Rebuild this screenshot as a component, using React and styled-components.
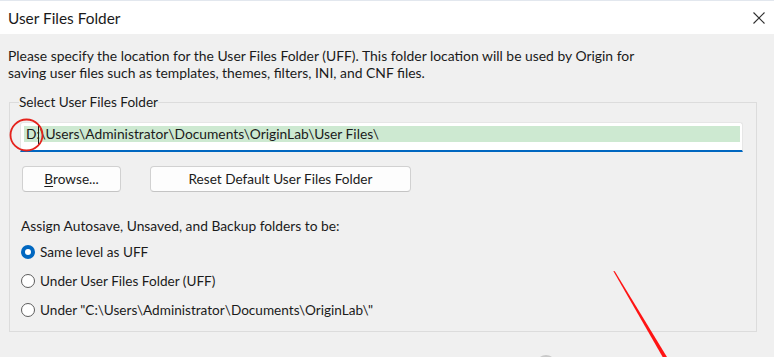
import React from "react";
import styled, { createGlobalStyle } from "styled-components";

const GlobalStyle = createGlobalStyle`
  html, body { margin: 0; padding: 0; background: #f0f0f0; }
  body { font-family: Lato, "Noto Sans", sans-serif; color: #1b1b1b; }
  * { box-sizing: border-box; }
`;

const Dialog = styled.div`
  position: relative;
  width: 774px;
  height: 357px;
  overflow: hidden;
  background: #f0f0f0;
`;

const TitleBar = styled.div`
  height: 34px;
  background: #ffffff;
  border-top: 1px solid #e2e7ee;
  display: flex;
  align-items: center;
  justify-content: space-between;
  padding: 0 9px 0 8px;
`;

const Title = styled.div`
  font-size: 15.4px;
  color: #1a1a1a;
`;

const CloseButton = styled.div`
  width: 12px;
  height: 14px;
  display: flex;
  align-items: center;
  justify-content: center;
`;

const Body = styled.div`
  padding: 13px 17px 0 8px;
`;

const Description = styled.p`
  margin: 0;
  font-size: 13.9px;
  line-height: 17px;
  white-space: nowrap;
`;

const GroupBox = styled.fieldset`
  margin: 13px 0 0 1px;
  padding: 0 13px 7px 10px;
  border: 1px solid #dcdcdc;
  min-width: 0;
`;

const Legend = styled.legend`
  padding: 0;
  margin-left: -1px;
  font-size: 13.6px;
  line-height: 17px;
`;

const PathField = styled.div`
  margin-top: 11px;
  height: 30px;
  background: #ffffff;
  border: 1px solid #e6e6e6;
  border-bottom: 2px solid #0067c0;
  border-radius: 3px 3px 0 0;
  padding: 3px 2px 0 3px;
`;

const Selection = styled.div`
  height: 16px;
  background: #cde9d1;
  font-size: 13.8px;
  line-height: 16px;
  padding-left: 2px;
  white-space: nowrap;
  display: flex;
  align-items: center;
`;

const Caret = styled.span`
  display: inline-block;
  width: 1.5px;
  height: 19px;
  margin: 0 0 0 -2px;
  background: #202020;
`;

const ButtonRow = styled.div`
  display: flex;
  gap: 29px;
  margin: 14px 0 0 2px;
`;

const Button = styled.div`
  width: ${(p) => p.$w}px;
  height: 26px;
  background: #fdfdfd;
  border: 1px solid #d1d1d1;
  border-bottom-color: #c4c4c4;
  border-radius: 4px;
  font-size: 13.6px;
  display: flex;
  align-items: center;
  justify-content: center;
`;

const Key = styled.span`
  text-decoration: underline;
  text-underline-offset: 2px;
`;

const SectionLabel = styled.div`
  margin: 25px 0 0 1px;
  font-size: 13.8px;
  line-height: 17px;
`;

const RadioList = styled.div`
  margin: 3px 0 0 1px;
  display: flex;
  flex-direction: column;
`;

const RadioRow = styled.div`
  height: 29px;
  display: flex;
  align-items: center;
  gap: 5px;
  font-size: 13.6px;
`;

const RadioDot = styled.span`
  width: 14px;
  height: 14px;
  border-radius: 50%;
  flex: none;
  background: ${(p) => (p.$checked ? "#0067c0" : "#ffffff")};
  border: ${(p) => (p.$checked ? "none" : "1px solid #5d5d5d")};
  display: flex;
  align-items: center;
  justify-content: center;
  &::after {
    content: "";
    display: ${(p) => (p.$checked ? "block" : "none")};
    width: 6px;
    height: 6px;
    border-radius: 50%;
    background: #ffffff;
  }
`;

const Annotations = styled.svg`
  position: absolute;
  left: 0;
  top: 0;
  pointer-events: none;
`;

const options = [
  { label: "Same level as UFF", checked: true },
  { label: "Under User Files Folder (UFF)", checked: false },
  { label: 'Under "C:\\Users\\Administrator\\Documents\\OriginLab\\"', checked: false },
];

export default function App() {
  return (
    <>
      <GlobalStyle />
      <Dialog>
        <TitleBar>
          <Title>User Files Folder</Title>
          <CloseButton>
            <svg width="12" height="12" viewBox="0 0 12 12">
              <path d="M0.5 0.5 L11.5 11.5 M11.5 0.5 L0.5 11.5" stroke="#303030" strokeWidth="1.1" fill="none" />
            </svg>
          </CloseButton>
        </TitleBar>
        <Body>
          <Description>
            Please specify the location for the User Files Folder (UFF). This folder location will be used by Origin for
            <br />
            saving user files such as templates, themes, filters, INI, and CNF files.
          </Description>
          <GroupBox>
            <Legend>Select User Files Folder</Legend>
            <PathField>
              <Selection>
                D:<Caret />
                {"\\Users\\Administrator\\Documents\\OriginLab\\User Files\\"}
              </Selection>
            </PathField>
            <ButtonRow>
              <Button $w={99}>
                <Key>B</Key>rowse...
              </Button>
              <Button $w={261}>Reset Default User Files Folder</Button>
            </ButtonRow>
            <SectionLabel>Assign Autosave, Unsaved, and Backup folders to be:</SectionLabel>
            <RadioList>
              {options.map((o) => (
                <RadioRow key={o.label}>
                  <RadioDot $checked={o.checked} />
                  {o.label}
                </RadioRow>
              ))}
            </RadioList>
          </GroupBox>
        </Body>
        <Annotations width="774" height="357" viewBox="0 0 774 357">
          <ellipse cx="26.5" cy="135" rx="16" ry="15.5" fill="none" stroke="#e5231d" strokeWidth="1.8" />
          <polygon points="613.3,271 614.8,271.3 670,362 665.5,362" fill="#ff1414" />
          <circle cx="546" cy="365" r="9" fill="none" stroke="#c9c9c9" strokeWidth="2" />
        </Annotations>
      </Dialog>
    </>
  );
}
